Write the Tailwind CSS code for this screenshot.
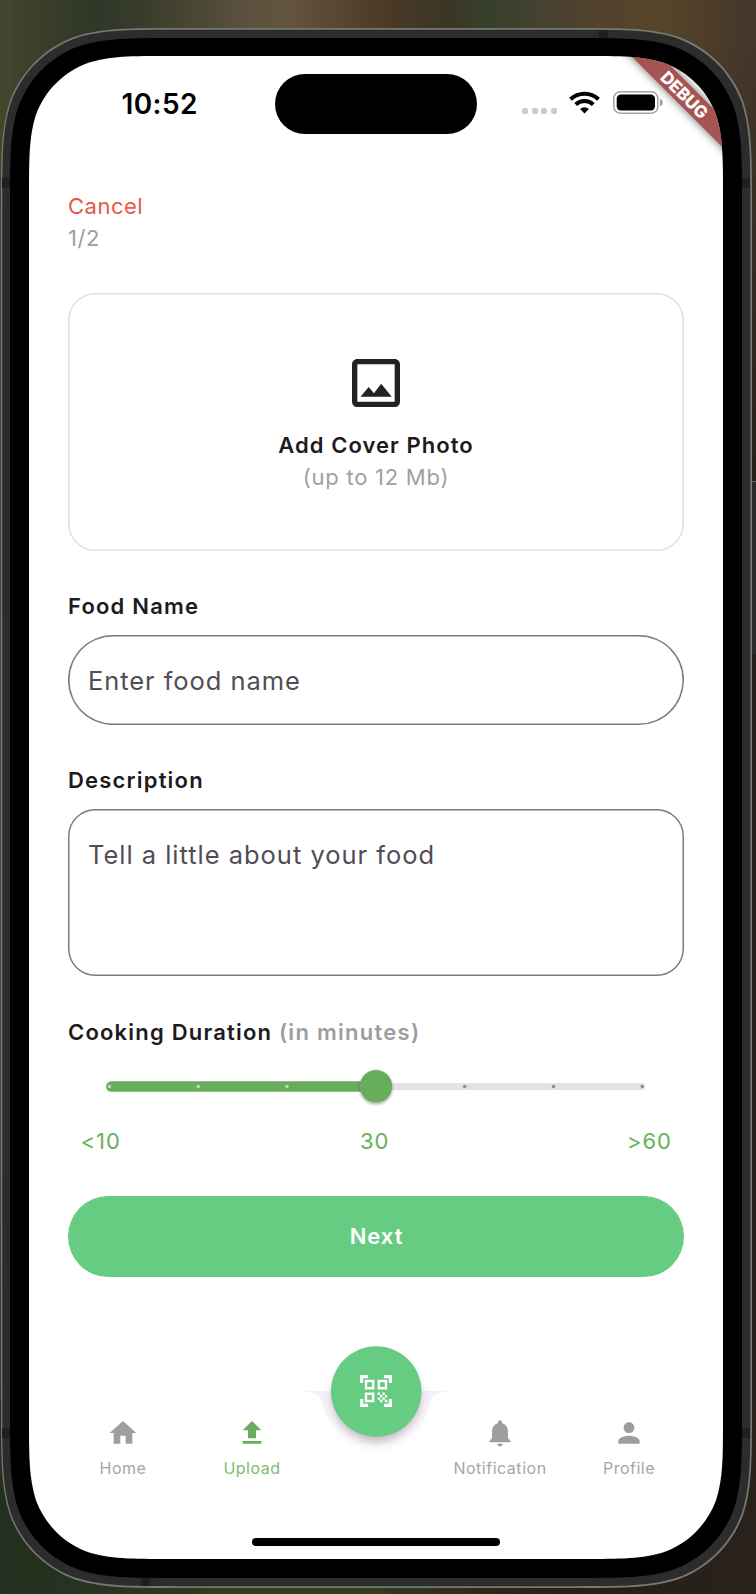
<!DOCTYPE html>
<html lang="en">
<head>
<meta charset="utf-8">
<title>Upload recipe</title>
<script src="https://cdn.jsdelivr.net/npm/@tailwindcss/browser@4"></script>
</head>
<body class="relative w-[756px] h-[1594px] overflow-hidden bg-[#241f1a] font-['Inter',sans-serif] text-[#1d1b20]">

<!-- Desktop wallpaper and device body -->
<svg class="absolute inset-0" width="756" height="1594" viewBox="0 0 756 1594">
  <defs>
    <linearGradient id="wallTop" x1="0" x2="1" y1="0" y2="0">
      <stop offset="0" stop-color="#43462c"/><stop offset=".07" stop-color="#383c2a"/><stop offset=".13" stop-color="#2e3728"/>
      <stop offset=".19" stop-color="#3a3c2b"/><stop offset=".26" stop-color="#4b4735"/><stop offset=".32" stop-color="#5a503e"/><stop offset=".38" stop-color="#62543f"/>
      <stop offset=".46" stop-color="#57432f"/><stop offset=".52" stop-color="#483826"/><stop offset=".59" stop-color="#3a3625"/>
      <stop offset=".65" stop-color="#37402c"/><stop offset=".71" stop-color="#454130"/><stop offset=".78" stop-color="#51422e"/><stop offset=".87" stop-color="#57442a"/>
      <stop offset="1" stop-color="#43362a"/>
    </linearGradient>
    <linearGradient id="wallBottom" x1="0" x2="1" y1="0" y2="0">
      <stop offset="0" stop-color="#22301f"/><stop offset=".1" stop-color="#273320"/><stop offset=".28" stop-color="#2f3a1e"/>
      <stop offset=".48" stop-color="#343c20"/><stop offset=".62" stop-color="#2c2c1b"/><stop offset=".75" stop-color="#261f18"/><stop offset="1" stop-color="#29211b"/>
    </linearGradient>
    <linearGradient id="wallLeft" x1="0" x2="0" y1="0" y2="1">
      <stop offset="0" stop-color="#43462c"/><stop offset=".7" stop-color="#4a4c38"/><stop offset="1" stop-color="#253122"/>
    </linearGradient>
    <linearGradient id="wallFade" x1="0" x2="0" y1="0" y2="1">
      <stop offset="0" stop-color="#241f1a" stop-opacity="0"/><stop offset="1" stop-color="#241f1a"/>
    </linearGradient>
  </defs>
  <rect width="756" height="500" fill="url(#wallTop)"/>
  <rect x="600" y="40" width="156" height="460" fill="url(#wallFade)"/>
  <rect width="12" height="1594" fill="url(#wallLeft)"/>
  <rect y="1400" width="756" height="194" fill="url(#wallBottom)"/>
  <rect x="750" y="481" width="6" height="173" fill="#2b2a28"/>
  <rect x="750" y="481" width="6" height="1" fill="#6c6a66"/>
  <path id="edge" fill="#787872"/>
  <path id="band" fill="#2c2c2c"/>
  <g fill="#1f1f1f">
    <rect x="598.5" y="30" width="9.500" height="9"/>
    <rect x="2" y="178" width="9" height="10"/><rect x="741" y="178" width="9" height="10"/>
    <rect x="2" y="1428" width="9" height="10"/><rect x="741" y="1428" width="9" height="10"/>
    <rect x="141" y="1577" width="9" height="9"/>
  </g>
  <path id="bezel" fill="#000"/>
  <path id="screen" fill="#fff"/>
</svg>

<div class="relative flex h-full w-full flex-col pl-[68px] pr-[72px] pt-[56px]">

  <!-- Status bar -->
  <header class="flex h-[96px] items-start">
    <div class="ml-[53.500px] mt-[31px] w-[153px] text-[28px] leading-[34px] font-semibold tracking-[0.4px] text-black">10:52</div>
    <div class="mt-[18px] h-[59.500px] w-[202.500px] rounded-full bg-black"></div>
    <div class="ml-[45px] mt-[51.500px] flex gap-[3.700px]">
      <i class="size-[6px] rounded-[2px] bg-[#cbcbcb]"></i><i class="size-[6px] rounded-[2px] bg-[#cbcbcb]"></i><i class="size-[6px] rounded-[2px] bg-[#cbcbcb]"></i><i class="size-[6px] rounded-[2px] bg-[#cbcbcb]"></i>
    </div>
    <svg class="ml-[12px] mt-[35px] shrink-0" width="31" height="23" viewBox="0 0 31 23">
      <g fill="none" stroke="#000" stroke-width="4">
        <path d="M1.500 8.300a20.200 20.200 0 0 1 28 0"/>
        <path d="M6.700 13.500a12.800 12.800 0 0 1 17.600 0"/>
      </g>
      <path d="M15.500 22.500l-4.400-4.400a6.400 6.400 0 0 1 8.800 0z"/>
    </svg>
    <svg class="ml-[12.500px] mt-[35px] shrink-0" width="51" height="23" viewBox="0 0 51 23">
      <rect x=".8" y=".8" width="44" height="21.400" rx="6.500" fill="none" stroke="#a3a3a3" stroke-width="1.500"/>
      <rect x="3.700" y="3.500" width="38.300" height="16" rx="4.200"/>
      <path d="M47 7.700c3.500 1 3.500 6.600 0 7.600z" fill="#9a9a9a"/>
    </svg>
  </header>

  <main class="flex flex-col pt-[38px] text-[22px] leading-[32px]">
    <div class="tracking-[0.5px] text-[#e25b49]">Cancel</div>
    <div class="tracking-[0.600px] text-[#9e9e9e]">1/2</div>

    <section class="mt-[38.500px] flex h-[258.500px] flex-col items-center rounded-[27px] shadow-[inset_0_0_0_1.6px_#e1e1e1] pt-[58px]">
      <svg width="64" height="64" viewBox="0 0 24 24" fill="#222"><path d="M19 5v14H5V5h14m0-2H5c-1.100 0-2 .9-2 2v14c0 1.100.9 2 2 2h14c1.100 0 2-.9 2-2V5c0-1.100-.9-2-2-2zm-5.040 9.290l-2.750 3.540-1.960-2.360L6.200 17.200h11.700l-3.940-4.910z"/></svg>
      <div class="mt-[14px] font-semibold tracking-[1.050px]">Add Cover Photo</div>
      <div class="tracking-[0.750px] text-[#a0a0a0]">(up to 12 Mb)</div>
    </section>

    <label class="mt-[39px] font-semibold tracking-[1.200px]">Food Name</label>
    <div class="mt-[13px] flex h-[90px] items-center rounded-full shadow-[inset_0_0_0_1.5px_#7c7980] pl-[20px] pt-[1px] text-[25.500px] tracking-[0.930px] text-[#514d56]">Enter food name</div>

    <label class="mt-[39px] font-semibold tracking-[1.200px]">Description</label>
    <div class="mt-[13px] h-[167px] rounded-[27px] shadow-[inset_0_0_0_1.5px_#7c7980] pl-[20px] pt-[30px] text-[25.500px] tracking-[0.980px] text-[#514d56]">Tell a little about your food</div>

    <div class="mt-[40px] font-semibold tracking-[1.200px] whitespace-nowrap">Cooking Duration <span class="tracking-[1.260px] text-[#9e9e9e]">(in minutes)</span></div>

    <!-- Duration slider -->
    <svg class="mt-[16px]" width="616" height="44" viewBox="68 1064 616 44">
      <defs><filter id="knobShadow" x="-50%" y="-50%" width="200%" height="200%"><feDropShadow dx="0" dy="1.500" stdDeviation="1.600" flood-color="#000" flood-opacity=".4"/></filter></defs>
      <rect x="366" y="1083" width="279" height="7" rx="3.500" fill="#e6e0e9"/>
      <rect x="106" y="1081.300" width="270" height="10.400" rx="5.200" fill="#68ad5c"/>
      <circle cx="376" cy="1086.300" r="16.200" fill="#68ad5c" filter="url(#knobShadow)"/>
      <g fill="#c0dfba"><circle cx="109.500" cy="1086.500" r="1.700"/><circle cx="198.300" cy="1086.500" r="1.700"/><circle cx="287" cy="1086.500" r="1.700"/></g>
      <g fill="#68ad5c"><circle cx="464.700" cy="1086.500" r="1.800"/><circle cx="553.500" cy="1086.500" r="1.800"/><circle cx="642.300" cy="1086.500" r="1.800"/></g>
    </svg>

    <div class="mt-[17px] flex justify-between pl-[12.500px] pr-[12px] tracking-[1px] text-[#68b05c]">
      <span>&lt;10</span><span class="pl-[1.500px]">30</span><span>&gt;60</span>
    </div>

    <button class="mt-[38.500px] h-[81px] rounded-full bg-[#65cc82] pl-[1px] font-semibold tracking-[0.960px] text-white">Next</button>
  </main>

  <!-- Bottom navigation -->
  <nav class="mt-[140px] flex text-[16px] leading-[20px] tracking-[0.520px] text-[#a6a6a6]">
    <div class="flex w-[109px] flex-col items-center">
      <svg width="32" height="32" viewBox="0 0 24 24" fill="#9e9e9e"><path d="M10 20v-6h4v6h5v-8h3L12 3 2 12h3v8z"/></svg>
      <span class="mt-[9px] pl-[1px]">Home</span>
    </div>
    <div class="flex w-[149px] flex-col items-center text-[#7cbb72]">
      <svg width="32" height="32" viewBox="0 0 24 24" fill="#68ad5c"><path d="M9 16h6v-6h4l-7-7-7 7h4v6zm-4 2h14v2H5v-2z"/></svg>
      <span class="mt-[9px] pl-[1px]">Upload</span>
    </div>
    <div class="w-[99px]"></div>
    <div class="flex w-[149px] flex-col items-center">
      <svg width="32" height="32" viewBox="0 0 24 24" fill="#9e9e9e"><path d="M12 22c1.100 0 2-.9 2-2h-4c0 1.100.89 2 2 2zm6-6v-5c0-3.070-1.640-5.640-4.500-6.320V4c0-.83-.67-1.500-1.500-1.500s-1.500.67-1.500 1.500v.68C7.630 5.360 6 7.920 6 11v5l-2 2v1h16v-1l-2-2z"/></svg>
      <span class="mt-[9px] pl-[1px]">Notification</span>
    </div>
    <div class="flex w-[109px] flex-col items-center">
      <svg width="32" height="32" viewBox="0 0 24 24" fill="#9e9e9e"><path d="M12 12c2.210 0 4-1.790 4-4s-1.790-4-4-4-4 1.790-4 4 1.790 4 4 4zm0 2c-2.670 0-8 1.340-8 4v2h16v-2c0-2.660-5.330-4-8-4z"/></svg>
      <span class="mt-[9px] pl-[1px]">Profile</span>
    </div>
  </nav>
  <div class="mt-[60px] ml-[183.500px] h-[8px] w-[248.500px] rounded-full bg-black"></div>
</div>

<!-- Scan button over the notch of the bar -->
<svg class="absolute left-[296px] top-[1330px]" width="160" height="140" viewBox="296 1330 160 140">
  <defs>
    <filter id="fabShadow" x="-40%" y="-40%" width="180%" height="180%"><feGaussianBlur stdDeviation="5.500"/></filter>
    <linearGradient id="notchTint" x1="0" x2="0" y1="1391" y2="1436" gradientUnits="userSpaceOnUse"><stop offset="0" stop-color="#f5edf8"/><stop offset="1" stop-color="#f5edf8" stop-opacity="0"/></linearGradient>
  </defs>
  <path d="M302 1391h148.500c-16 1-18 5-21 14a54 54 0 0 1-106.500 0c-3-9-5-13-21-14z" fill="url(#notchTint)"/>
  <circle cx="376.250" cy="1399" r="42.500" fill="#5b4062" opacity=".42" filter="url(#fabShadow)"/>
  <circle cx="376.250" cy="1391.500" r="45.300" fill="#65cc82"/>
  <g transform="translate(356.800 1371.800) scale(1.6)" fill="#fff"><path d="M9.500 6.500v3h-3v-3h3M11 5H5v6h6V5zM9.500 14.500v3h-3v-3h3M11 13H5v6h6v-6zM17.500 6.500v3h-3v-3h3M19 5h-6v6h6V5zM13 13h1.500v1.500H13V13zM14.500 14.500H16V16h-1.500v-1.500zM16 13h1.500v1.500H16V13zM13 16h1.500v1.500H13V16zM14.500 17.500H16V19h-1.500v-1.500zM16 16h1.500v1.500H16V16zM17.500 14.500H19V16h-1.500v-1.500zM17.500 17.500H19V19h-1.500v-1.500zM22 7h-2V4h-3V2h5v5zM22 22v-5h-2v3h-3v2h5zM2 22h5v-2H4v-3H2v5zM2 2v5h2V4h3V2H2z"/></g>
</svg>

<!-- Debug banner, cut off by the screen's corner -->
<svg class="absolute left-[600px] top-[50px]" width="130" height="130" viewBox="600 50 130 130">
  <defs>
    <clipPath id="screenClip"><path id="screenShape"/></clipPath>
    <filter id="ribbonShadow" x="-20%" y="-100%" width="140%" height="300%"><feGaussianBlur stdDeviation="5"/></filter>
  </defs>
  <g clip-path="url(#screenClip)">
    <g transform="translate(683.500 93.500) rotate(45)">
      <rect x="-100" y="-10.500" width="200" height="21" fill="#000" opacity=".55" filter="url(#ribbonShadow)"/>
      <rect x="-100" y="-10.500" width="200" height="21" fill="#a65452"/>
      <text x="1.500" y="6.500" text-anchor="middle" fill="#fff" font-family="Inter, sans-serif" font-weight="800" font-size="17" letter-spacing="-.1">DEBUG</text>
    </g>
  </g>
</svg>

<script>
  // Rounded rectangle with continuous-curvature corners.
  function squircle(l, t, r, b, R) {
    const k = [1.528665, 1.08849296, 0.86840694, 0.63149379, 0.07491139, 0.37282383, 0.16905956].map(v => v * R);
    const [e, c1, c2, p, q, m, n] = k;
    const corner = (f) => {
      const s = [[c1, 0], [c2, 0], [p, q], [m, n], [n, m], [q, p], [0, c2], [0, c1], [0, e]].map(([x, y]) => f(x, y).join(' '));
      return 'C' + s.join(' ');
    };
    return `M${l + e} ${t}L${r - e} ${t}` + corner((x, y) => [r - x, t + y]) +
      `L${r} ${b - e}` + corner((x, y) => [r - y, b - x]) +
      `L${l + e} ${b}` + corner((x, y) => [l + x, b - y]) +
      `L${l} ${t + e}` + corner((x, y) => [l + y, t + x]) + 'Z';
  }
  const set = (id, ...a) => document.getElementById(id).setAttribute('d', squircle(...a));
  set('edge', 1, 28, 752, 1588, 116.5);
  set('band', 2.3, 29.8, 750.3, 1586.2, 115);
  set('bezel', 10, 38, 742, 1578, 109);
  set('screen', 29, 56, 723, 1559, 93);
  set('screenShape', 29, 56, 723, 1559, 93);
</script>
</body>
</html>
